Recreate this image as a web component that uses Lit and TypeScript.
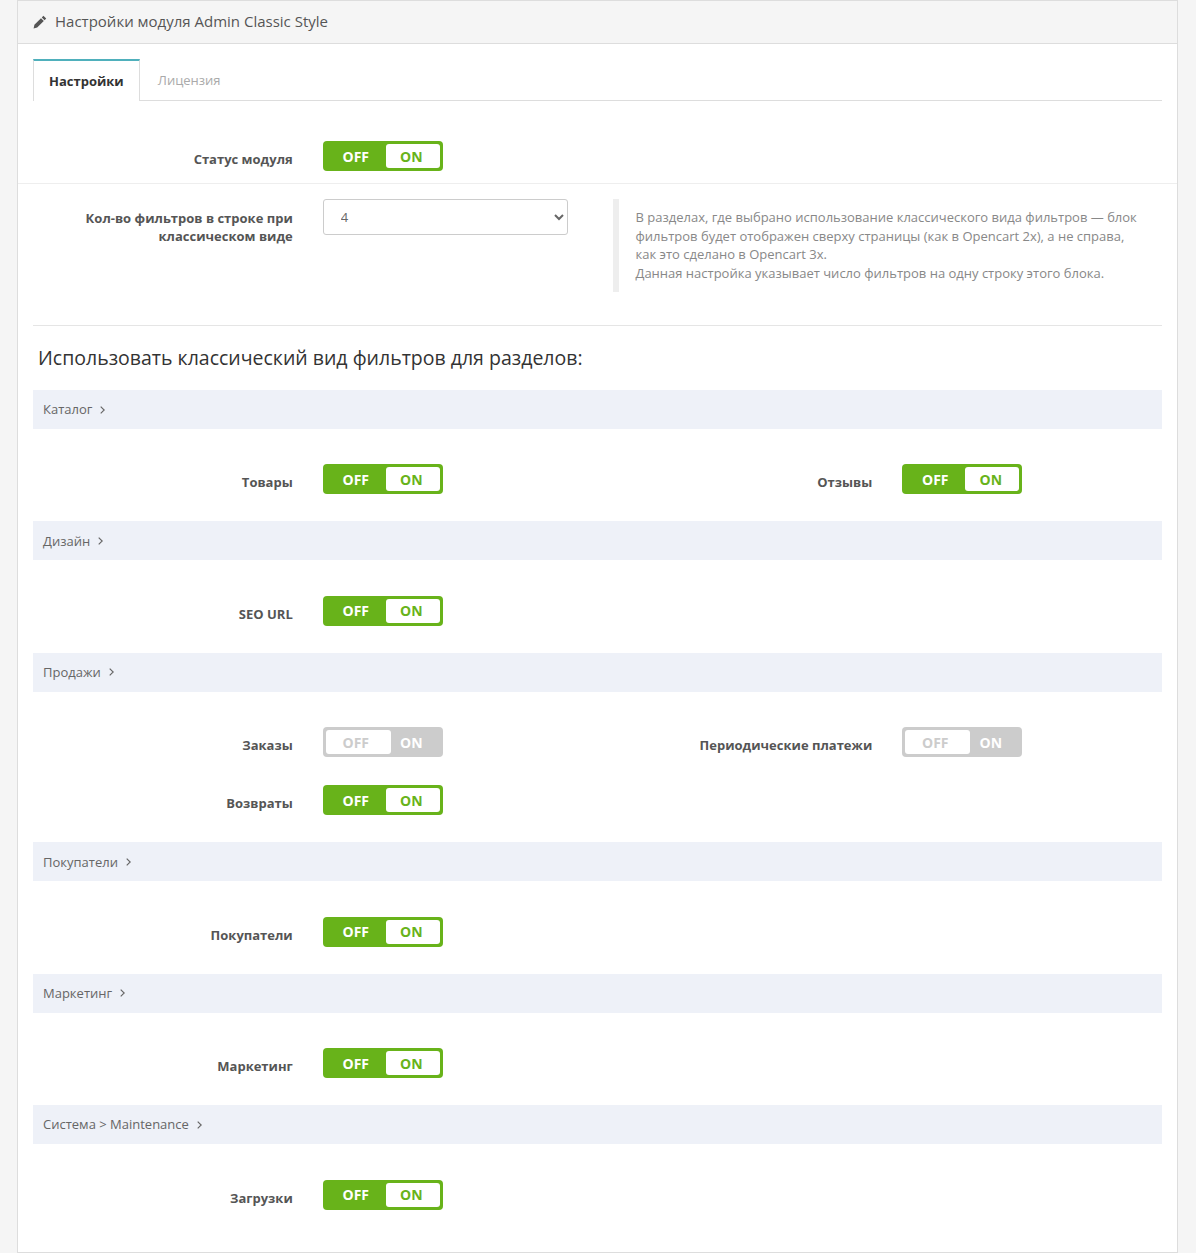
import { LitElement, html, css } from "lit";
import { customElement } from "lit/decorators.js";

type Item = { label: string; off?: boolean };
type Section = { title: string; rows: Item[][] };

const SECTIONS: Section[] = [
  { title: "Каталог", rows: [[{ label: "Товары" }, { label: "Отзывы" }]] },
  { title: "Дизайн", rows: [[{ label: "SEO URL" }]] },
  {
    title: "Продажи",
    rows: [
      [{ label: "Заказы", off: true }, { label: "Периодические платежи", off: true }],
      [{ label: "Возвраты" }],
    ],
  },
  { title: "Покупатели", rows: [[{ label: "Покупатели" }]] },
  { title: "Маркетинг", rows: [[{ label: "Маркетинг" }]] },
  { title: "Система > Maintenance", rows: [[{ label: "Загрузки" }]] },
];

@customElement("app-root")
export class AppRoot extends LitElement {
  static styles = css`
    :host {
      display: block;
      background: #f5f5f5;
      height: 1253px;
      overflow: hidden;
      font-family: "Open Sans", sans-serif;
      font-size: 13px;
      line-height: 18.57px;
      color: #555;
      padding-left: 17px;
      padding-right: 18px;
      box-sizing: border-box;
    }
    * { box-sizing: border-box; }
    .panel {
      background: #fff;
      border: 1px solid #ddd;
      border-top: 0;
      height: 1253px;
    }
    .head {
      height: 44px;
      background: #f5f5f5;
      border-bottom: 1px solid #ddd;
      border-top: 1px solid #ddd;
      display: flex;
      align-items: center;
      padding: 0 0 2px 15px;
      gap: 8px;
      font-size: 15px;
      color: #555;
    }
    .head svg { width: 14px; height: 14px; fill: #555; flex: none; margin-top: 1px; }
    .body { padding: 15px 15px 0; }
    .tabs {
      display: flex;
      height: 42px;
      border-bottom: 1px solid #ddd;
    }
    .tab {
      padding: 2px 16px 0 18px;
      display: flex;
      align-items: center;
      font-size: 13px;
      color: #aaa;
    }
    .tab.active {
      height: 42px;
      padding: 0 15px;
      background: #fff;
      border: 1px solid #ddd;
      border-top: 2px solid #4fb0bc;
      border-bottom: 0;
      color: #333;
      font-weight: 700;
    }
    .grid {
      display: grid;
      grid-template-columns: repeat(4, 25%);
      margin: 0 -15px;
    }
    .label {
      font-weight: 700;
      color: #555;
      text-align: right;
      padding: 9px 15px 0 0;
    }
    .control { padding-left: 15px; }
    .status { padding-top: 40px; padding-bottom: 12px; border-bottom: 1px solid #eee; }
    .filters {
      margin: 15px -15px 0;
      display: grid;
      grid-template-columns: 25% 25% 50%;
    }
    .filters .label { padding-top: 9.5px; }
    .select {
      display: block;
      width: 245px;
      height: 36px;
      border: 1px solid #ccc;
      border-radius: 3px;
      padding: 0 0 0 13px;
      color: #666;
      background: #fff;
      font-family: inherit;
      font-size: 13px;
    }
    .help {
      margin-left: 15px;
      border-left: 6px solid #eee;
      padding: 9px 20px 9px 17px;
      height: 93px;
      color: #888;
      font-size: 13px;
      white-space: nowrap;
    }
    .rule { height: 1px; background: #e5e5e5; margin-top: 33px; }
    h2 {
      font-weight: 400;
      font-size: 19.5px;
      line-height: 28px;
      color: #333;
      margin: 18px 0 18px 5px;
    }
    .band {
      height: 39px;
      background: #eef1f8;
      display: flex;
      align-items: center;
      padding-left: 10px;
      gap: 8px;
      color: #666;
    }
    .band svg { width: 5px; height: 8px; fill: none; stroke: #666; stroke-width: 1.2; }
    .rows { padding: 35.4px 0 27.05px; display: flex; flex-direction: column; gap: 28px; }
    .toggle {
      width: 120px;
      height: 30px;
      border-radius: 4px;
      background: #68b31a;
      padding: 3px;
      display: flex;
      font-weight: 700;
      font-size: 14px;
      line-height: 23.4px;
      color: #fff;
    }
    .toggle span { text-align: center; height: 24px; padding-top: 0.6px; }
    .t-off { width: 60px; }
    .t-on {
      width: 54px;
      padding-right: 3px;
      background: #fff;
      color: #68b31a;
      border-radius: 3px;
    }
    .toggle.disabled { background: #ccc; }
    .toggle.disabled .t-off {
      width: 65px;
      padding-right: 5px;
      background: #fff;
      color: #ccc;
      border-radius: 3px;
    }
    .toggle.disabled .t-on { width: 49px; padding-right: 8px; background: transparent; color: #fff; }
  `;

  private toggle(off = false) {
    return html`<div class="toggle ${off ? "disabled" : ""}">
      <span class="t-off">OFF</span><span class="t-on">ON</span>
    </div>`;
  }

  private field(it: Item) {
    return html`<div class="label">${it.label}</div>
      <div class="control">${this.toggle(it.off)}</div>`;
  }

  render() {
    return html`<div class="panel">
      <div class="head">
        <svg viewBox="0 0 14 14"><path d="M10.4.8 13.2 3.6 11.6 5.2 8.8 2.4ZM8 3.2 10.8 6 4.2 12.6.6 13.4 1.4 9.8Z" /></svg>
        <span>Настройки модуля Admin Classic Style</span>
      </div>
      <div class="body">
        <div class="tabs">
          <div class="tab active">Настройки</div>
          <div class="tab">Лицензия</div>
        </div>
        <div class="grid status">
          <div class="label">Статус модуля</div>
          <div class="control">${this.toggle()}</div>
        </div>
        <div class="filters">
          <div class="label">Кол-во фильтров в строке при классическом виде</div>
          <div class="control">
            <select class="select"><option>4</option></select>
          </div>
          <div class="help">
            В разделах, где выбрано использование классического вида фильтров — блок<br />
            фильтров будет отображен сверху страницы (как в Opencart 2x), а не справа,<br />
            как это сделано в Opencart 3x.<br />
            Данная настройка указывает число фильтров на одну строку этого блока.
          </div>
        </div>
        <div class="rule"></div>
        <h2>Использовать классический вид фильтров для разделов:</h2>
        ${SECTIONS.map(
          (s) => html`<div class="band">
              <span>${s.title}</span>
              <svg viewBox="0 0 5 8"><path d="M.7.6 4.2 4 .7 7.4" /></svg>
            </div>
            <div class="rows">
              ${s.rows.map((r) => html`<div class="grid">${r.map((it) => this.field(it))}</div>`)}
            </div>`
        )}
      </div>
    </div>`;
  }
}
